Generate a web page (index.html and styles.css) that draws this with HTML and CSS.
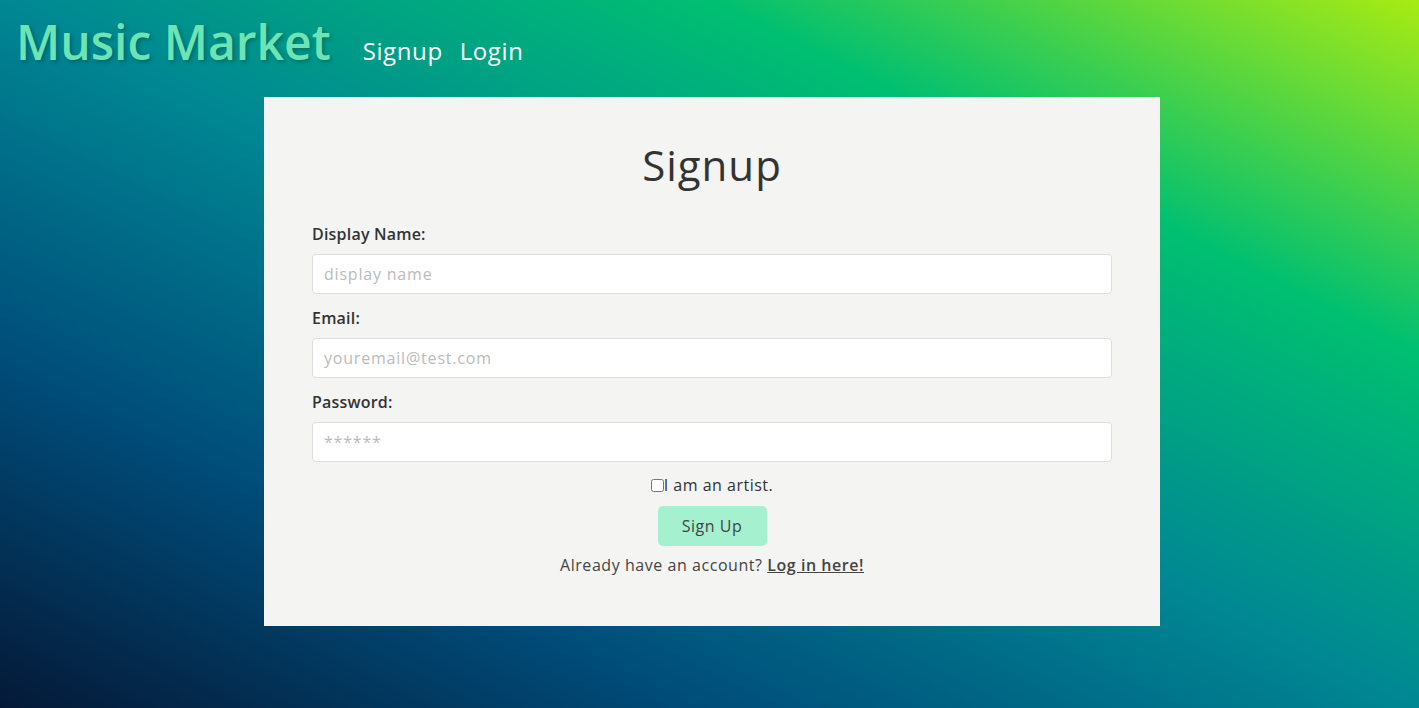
FILE: index.html
```html
<!DOCTYPE html>
<html lang="en">
<head>
<meta charset="utf-8">
<title>Music Market - Signup</title>
<link rel="stylesheet" href="styles.css">
</head>
<body>
<header class="topbar">
  <a class="logo" href="#">Music Market</a>
  <nav class="nav">
    <a href="#">Signup</a>
    <a href="#">Login</a>
  </nav>
</header>
<div class="page">
<main class="card">
  <h1 class="title">Signup</h1>
  <form class="form">
    <label class="label" for="dn">Display Name:</label>
    <input class="input" id="dn" type="text" placeholder="display name">
    <label class="label" for="em">Email:</label>
    <input class="input" id="em" type="email" placeholder="youremail@test.com">
    <label class="label" for="pw">Password:</label>
    <input class="input" id="pw" type="password" placeholder="******">
    <div class="artist"><input type="checkbox" id="ar" class="check"><label for="ar">I am an artist.</label></div>
    <button type="button" class="btn">Sign Up</button>
    <p class="already">Already have an account? <a href="#">Log in here!</a></p>
  </form>
</main>
</div>
</body>
</html>
```
FILE: styles.css
```css
* { box-sizing: border-box; }
html, body { height: 100%; }
body {
  margin: 0;
  font-family: "Open Sans", "Noto Sans", sans-serif;
  color: #333;
  background: linear-gradient(to right top, #051937, #004d7a, #008793, #00bf72, #a8eb12);
  background-attachment: fixed;
  min-height: 708px;
}
.topbar {
  display: flex;
  align-items: baseline;
  gap: 32px;
  padding: 9px 16px 0;
  height: 97px;
}
.logo {
  font-size: 48px;
  font-weight: 600;
  color: #6de4b4;
  text-decoration: none;
  text-shadow: 2px 2px 4px rgba(0,0,0,0.25);
}
.nav { display: flex; gap: 17px; }
.nav a {
  color: #fff;
  text-decoration: none;
  font-size: 24px;
  letter-spacing: 0.6px;
}
.page { padding-left: 5px; }
.card {
  width: 896px;
  margin: 0 auto;
  background: #f4f4f2;
  padding: 38px 48px 51px;
  letter-spacing: 0.5px;
}
.title {
  margin: 0 0 28px;
  text-align: center;
  font-size: 42px;
  font-weight: 400;
  line-height: 60px;
  letter-spacing: 1px;
  color: #333;
}
.form { display: flex; flex-direction: column; }
.label {
  font-size: 16px;
  font-weight: 600;
  line-height: 22px;
  margin-bottom: 9px;
  letter-spacing: 0.2px;
  color: #333;
}
.input {
  height: 40px;
  border: 1px solid #ddd;
  border-radius: 4px;
  background: #fff;
  padding: 0 11px;
  font-family: inherit;
  font-size: 16px;
  letter-spacing: 0.8px;
  margin-bottom: 13px;
}
.input::placeholder { color: #bbb; }
.artist {
  display: flex;
  align-items: center;
  justify-content: center;
  font-size: 16px;
  line-height: 20px;
}
.check { margin: 0; width: 13px; height: 13px; }
.btn {
  align-self: center;
  margin-top: 11px;
  width: 109px;
  height: 40px;
  border: none;
  border-radius: 5px;
  background: #a5f0cf;
  color: #444;
  font-family: inherit;
  font-size: 16px;
  letter-spacing: 0.5px;
}
.already {
  margin: 9px 0 0;
  text-align: center;
  font-size: 16px;
  line-height: 20px;
  color: #444;
  letter-spacing: 0.55px;
}
.already a { color: #444; font-weight: 600; }
```
